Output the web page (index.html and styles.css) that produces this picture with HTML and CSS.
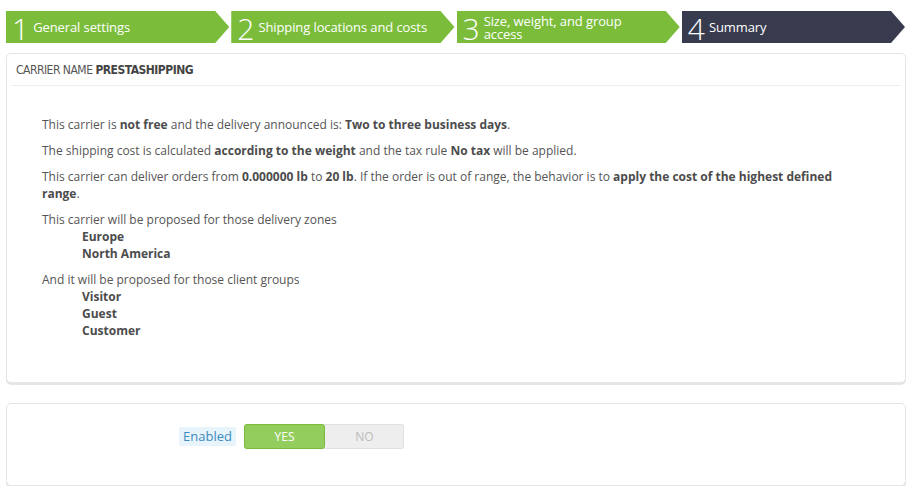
FILE: index.html
```html
<!DOCTYPE html>
<html>
<head>
<meta charset="utf-8">
<link rel="stylesheet" href="styles.css">
</head>
<body>
<div class="page">
  <div class="steps">
    <div class="step done"><span class="num">1</span><span class="label">General settings</span></div>
    <div class="step done"><span class="num">2</span><span class="label">Shipping locations and costs</span></div>
    <div class="step done"><span class="num">3</span><span class="label two">Size, weight, and group access</span></div>
    <div class="step current"><span class="num">4</span><span class="label">Summary</span></div>
  </div>

  <div class="panel">
    <div class="panel-heading">Carrier name <b>PrestaShipping</b></div>
    <div class="summary">
      <p>This carrier is <strong>not free</strong> and the delivery announced is: <strong>Two to three business days</strong>.</p>
      <p>The shipping cost is calculated <strong>according to the weight</strong> and the tax rule <strong>No tax</strong> will be applied.</p>
      <p>This carrier can deliver orders from <strong>0.000000 lb</strong> to <strong>20 lb</strong>. If the order is out of range, the behavior is to <strong>apply the cost of the highest defined range</strong>.</p>
      <div class="group">This carrier will be proposed for those delivery zones
        <ul>
          <li><strong>Europe</strong></li>
          <li><strong>North America</strong></li>
        </ul>
      </div>
      <div class="group">And it will be proposed for those client groups
        <ul>
          <li><strong>Visitor</strong></li>
          <li><strong>Guest</strong></li>
          <li><strong>Customer</strong></li>
        </ul>
      </div>
    </div>
  </div>

  <div class="panel panel-form">
    <div class="form-row">
      <div class="form-label"><span class="chip">Enabled</span></div>
      <div class="switch">
        <span class="opt yes">YES</span>
        <span class="opt no">NO</span>
      </div>
    </div>
  </div>
</div>
</body>
</html>
```

FILE: styles.css
```css
* { box-sizing: border-box; }
html, body { margin: 0; padding: 0; background: #fff; }
body {
  font-family: "Open Sans", "Liberation Sans", sans-serif;
  font-size: 12px;
  color: #555;
}
.page { padding: 11px 6px 0 6px; }

.steps {
  display: flex;
  gap: 2px;
  height: 32px;
  margin-right: 1px;
}
.step {
  flex: 1;
  display: flex;
  align-items: center;
  color: #fff;
  padding-left: 6px;
  clip-path: polygon(0 0, calc(100% - 14px) 0, 100% 50%, calc(100% - 14px) 100%, 0 100%);
}
.step.done { background: #7bbd3b; }
.step.current { background: #383b4e; }
.num {
  font-size: 30px;
  font-weight: 300;
  line-height: 32px;
  margin-right: 4px;
  margin-top: 3px;
}
.label {
  font-size: 13px;
  line-height: 13px;
  margin-top: 1px;
  letter-spacing: -0.1px;
}
.label.two { width: 150px; margin-top: 2px; }

.panel {
  margin-top: 10px;
  border: 1px solid #e6e6e6;
  border-radius: 5px;
  box-shadow: 0 2px 0 rgba(0,0,0,0.1);
  padding: 0 4px;
  background: #fff;
}
.panel-heading {
  height: 32px;
  line-height: 32px;
  padding-left: 5px;
  border-bottom: 1px solid #eee;
  font-family: "DejaVu Sans", "Open Sans", sans-serif;
  font-stretch: condensed;
  font-size: 12px;
  letter-spacing: -0.5px;
  text-transform: uppercase;
  color: #555;
}
.panel-heading b { color: #444; }

.summary {
  padding: 30px 30px 34px 31px;
  line-height: 17px;
}
.summary p { margin: 0 0 9px 0; }
.summary strong { font-weight: bold; color: #4c4c4c; }
.group { margin-bottom: 9px; }
.group ul { list-style: none; margin: 0; padding: 0 0 0 40px; }

.panel-form { margin-top: 20px; }
.form-row {
  display: flex;
  align-items: center;
  padding: 20px 0 36px 0;
}
.form-label {
  width: 225px;
  display: flex;
  justify-content: flex-end;
}
.chip {
  background: #e8f4fb;
  color: #3d8bbd;
  font-size: 13px;
  line-height: 19px;
  padding: 0 4px;
  border-radius: 2px;
}
.switch {
  margin-left: 8px;
  display: flex;
  width: 160px;
  height: 25px;
  background: #eeeeee;
  border-radius: 3px;
  box-shadow: inset 0 0 0 1px #e0e0e0;
}
.opt {
  flex: 1;
  display: flex;
  align-items: center;
  justify-content: center;
  font-size: 12px;
}
.opt.yes {
  background: #93cd5d;
  border: 1px solid #79bb3a;
  border-radius: 3px;
  color: #fff;
}
.opt.no { color: #bdbdbd; }
```
